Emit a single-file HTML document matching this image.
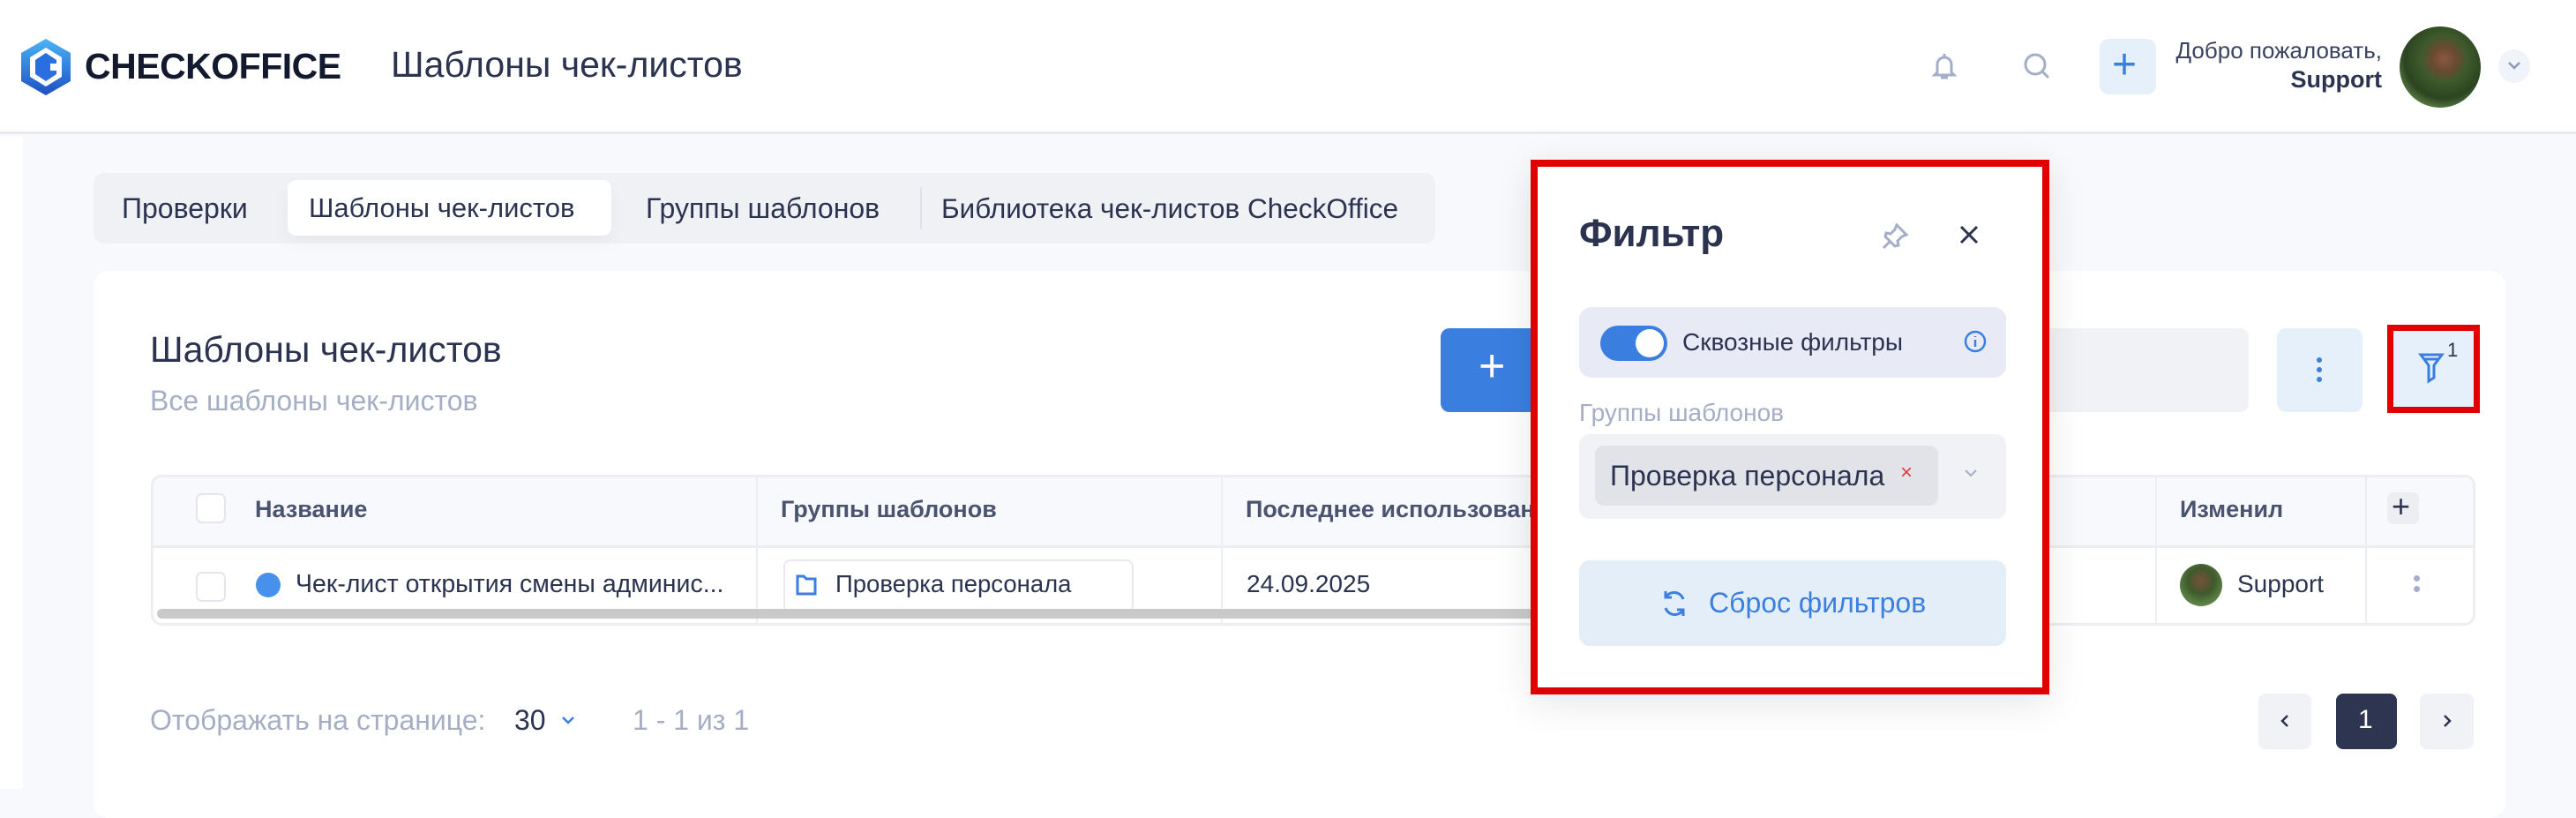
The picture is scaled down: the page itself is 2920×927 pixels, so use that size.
<!DOCTYPE html>
<html><head><meta charset="utf-8"><style>
*{box-sizing:border-box;margin:0;padding:0}
body{width:2920px;height:894px;overflow:hidden;background:#f8f9fc;font-family:"Liberation Sans","Noto Sans CJK SC",sans-serif;position:relative;color:#2b3350}
.a{position:absolute}
.t{position:absolute;white-space:nowrap}
</style></head><body>
<!-- header -->
<div class="a" style="left:0;top:0;width:2920px;height:152px;background:#fff;border-bottom:3px solid #e8eaee"></div>
<svg class="a" style="left:24px;top:44px" width="56" height="64" viewBox="0 0 56 64">
<defs><linearGradient id="g" x1="0" y1="0" x2="0" y2="1"><stop offset="0" stop-color="#4ab4f5"/><stop offset="1" stop-color="#1e4fc4"/></linearGradient></defs>
<polygon points="28,0 56,16 56,48 28,64 0,48 0,16" fill="url(#g)"/>
<polygon points="28,10 46,21 46,43 28,54 10,43 10,21" fill="#fff"/>
<polygon points="28,16 40,24 40,28 33,28 33,36 40,36 40,40 28,48 16,40 16,24" fill="#2a6fe0"/>
</svg>
<div class="t" style="left:96px;top:52px;font-size:41px;font-weight:900;color:#131a30;letter-spacing:-0.5px">CHECKOFFICE</div>
<div class="t" style="left:443px;top:50px;font-size:41px;color:#2b3350">Шаблоны чек-листов</div>
<svg class="a" style="left:2190px;top:58px" width="28" height="34" viewBox="0 0 28 34" fill="none" stroke="#a5aec8" stroke-width="3"><path d="M14 3v3M6 24V15a8 8 0 0 1 16 0v9l3 3H3z"/><path d="M10 30h8"/></svg>
<svg class="a" style="left:2292px;top:58px" width="34" height="34" viewBox="0 0 34 34" fill="none" stroke="#a5aec8" stroke-width="3"><circle cx="15" cy="15" r="11"/><path d="M23 23l7 7"/></svg>
<div class="a" style="left:2380px;top:44px;width:64px;height:63px;background:#e6f0fb;border-radius:10px"></div>
<div class="t" style="left:2394px;top:46px;font-size:48px;color:#3a7fe0;font-weight:300">+</div>
<div class="t" style="right:220px;top:42px;font-size:26px;color:#3b4360">Добро пожаловать,</div>
<div class="t" style="right:220px;top:75px;font-size:27px;color:#2b3350;font-weight:bold">Support</div>
<div class="a" style="left:2720px;top:30px;width:92px;height:92px;border-radius:50%;background:radial-gradient(circle at 55% 40%,#8a5a40 0,#6b4a30 18%,#3f5a2c 35%,#2c4420 60%,#6f9a58 85%,#c8d8b8 100%)"></div>
<div class="a" style="left:2832px;top:56px;width:36px;height:38px;border-radius:50%;background:#f0f3fa"></div>
<svg class="a" style="left:2842px;top:68px" width="16" height="12" viewBox="0 0 16 12"><path d="M2 3l6 6 6-6" fill="none" stroke="#8e98b5" stroke-width="2.5"/></svg>
<div class="a" style="left:0;top:155px;width:26px;height:739px;background:#fff"></div>

<!-- tabs -->
<div class="a" style="left:106px;top:196px;width:1521px;height:80px;background:#eff1f5;border-radius:12px"></div>
<div class="a" style="left:326px;top:204px;width:367px;height:63px;background:#fff;border-radius:10px;box-shadow:0 8px 20px rgba(0,0,0,0.04)"></div>
<div class="t" style="left:138px;top:218px;font-size:32px;color:#2b3350">Проверки</div>
<div class="t" style="left:350px;top:218px;font-size:31px;color:#2b3350">Шаблоны чек-листов</div>
<div class="t" style="left:732px;top:218px;font-size:32px;color:#2b3350">Группы шаблонов</div>
<div class="a" style="left:1043px;top:212px;width:2px;height:48px;background:#dfe2e8"></div>
<div class="t" style="left:1067px;top:218px;font-size:31.5px;color:#2b3350">Библиотека чек-листов CheckOffice</div>

<!-- card -->
<div class="a" style="left:106px;top:307px;width:2734px;height:620px;background:#fff;border-radius:18px"></div>
<div class="t" style="left:170px;top:373px;font-size:41px;color:#2b3350">Шаблоны чек-листов</div>
<div class="t" style="left:170px;top:436px;font-size:32px;color:#a5aec5">Все шаблоны чек-листов</div>
<div class="a" style="left:1633px;top:372px;width:200px;height:95px;background:#3a7fe0;border-radius:10px"></div>
<div class="t" style="left:1676px;top:385px;font-size:52px;color:#fff;font-weight:300">+</div>
<div class="a" style="left:2280px;top:372px;width:269px;height:95px;background:#f0f2f5;border-radius:10px"></div>
<div class="a" style="left:2581px;top:372px;width:97px;height:95px;background:#e6f0fb;border-radius:10px"></div>
<div class="a" style="left:2626px;top:405px;width:6px;height:6px;border-radius:50%;background:#3a7fe0;box-shadow:0 11px 0 #3a7fe0,0 22px 0 #3a7fe0"></div>
<div class="a" style="left:2706px;top:368px;width:105px;height:100px;border:7px solid #e00000;background:#e6f0fb"></div>
<svg class="a" style="left:2741px;top:398px" width="30" height="38" viewBox="0 0 30 38" fill="none" stroke="#3a7fe0" stroke-width="3"><path d="M3 4h24l-9 12v14l-6 4V16z"/><path d="M6 9h18"/></svg>
<div class="t" style="left:2774px;top:384px;font-size:22px;color:#2b3350">1</div>

<!-- table -->
<div class="a" style="left:171px;top:538px;width:2635px;height:171px;border:3px solid #eceef2;border-radius:12px;background:#fff;overflow:hidden">
 <div class="a" style="left:0;top:0;width:2635px;height:80px;background:#f8f9fc;border-bottom:3px solid #eceef2"></div>
</div>
<div class="a" style="left:857px;top:540px;width:2px;height:168px;background:#eceef2"></div>
<div class="a" style="left:1384px;top:540px;width:2px;height:168px;background:#eceef2"></div>
<div class="a" style="left:2443px;top:540px;width:2px;height:168px;background:#eceef2"></div>
<div class="a" style="left:2681px;top:540px;width:2px;height:168px;background:#eceef2"></div>
<div class="a" style="left:222px;top:559px;width:34px;height:34px;border:2px solid #e4e6ec;border-radius:7px;background:#fff"></div>
<div class="t" style="left:289px;top:562px;font-size:27px;font-weight:bold;color:#4a5370">Название</div>
<div class="t" style="left:885px;top:562px;font-size:27px;font-weight:bold;color:#4a5370">Группы шаблонов</div>
<div class="t" style="left:1412px;top:562px;font-size:27px;font-weight:bold;color:#4a5370">Последнее использование</div>
<div class="t" style="left:2471px;top:562px;font-size:27px;font-weight:bold;color:#4a5370">Изменил</div>
<div class="a" style="left:2706px;top:558px;width:36px;height:36px;background:#eceef2;border-radius:7px"></div>
<div class="t" style="left:2711px;top:553px;font-size:36px;color:#2b3350">+</div>
<div class="a" style="left:222px;top:648px;width:34px;height:34px;border:2px solid #e4e6ec;border-radius:7px;background:#fff"></div>
<div class="a" style="left:290px;top:649px;width:28px;height:28px;border-radius:50%;background:#4790ec"></div>
<div class="t" style="left:335px;top:646px;font-size:28.5px;color:#2b3350">Чек-лист открытия смены админис...</div>
<div class="a" style="left:888px;top:634px;width:397px;height:60px;border:2px solid #e8eaee;border-radius:8px;background:#fff"></div>
<svg class="a" style="left:902px;top:650px" width="24" height="26" viewBox="0 0 24 26" fill="none" stroke="#3a7fe0" stroke-width="3"><path d="M2 3h7l3 3h10v17H2z"/></svg>
<div class="t" style="left:947px;top:646px;font-size:27.5px;color:#2b3350">Проверка персонала</div>
<div class="t" style="left:1413px;top:646px;font-size:28px;color:#2b3350">24.09.2025</div>
<div class="a" style="left:2471px;top:639px;width:48px;height:48px;border-radius:50%;background:radial-gradient(circle at 50% 40%,#7a5038 0,#3f5a2c 40%,#6f9a58 90%)"></div>
<div class="t" style="left:2536px;top:646px;font-size:28px;color:#2b3350">Support</div>
<div class="a" style="left:2736px;top:652px;width:7px;height:7px;border-radius:50%;background:#a5aec8;box-shadow:0 12px 0 #a5aec8"></div>
<div class="a" style="left:178px;top:690px;width:1560px;height:11px;background:#c9c9c9;border-radius:6px"></div>

<!-- pagination -->
<div class="t" style="left:170px;top:798px;font-size:32px;color:#a5aec5">Отображать на странице:</div>
<div class="t" style="left:583px;top:798px;font-size:32px;color:#2b3350">30</div>
<svg class="a" style="left:636px;top:810px" width="16" height="12" viewBox="0 0 16 12"><path d="M2 3l6 6 6-6" fill="none" stroke="#3a7fe0" stroke-width="2.5"/></svg>
<div class="t" style="left:717px;top:798px;font-size:32px;color:#a5aec5">1 - 1 из 1</div>
<div class="a" style="left:2560px;top:786px;width:60px;height:63px;background:#f0f2f5;border-radius:8px"></div>
<svg class="a" style="left:2583px;top:808px" width="14" height="18" viewBox="0 0 14 18"><path d="M10 3L4 9l6 6" fill="none" stroke="#2b3350" stroke-width="2.5"/></svg>
<div class="a" style="left:2648px;top:786px;width:69px;height:63px;background:#2e3550;border-radius:8px"></div>
<div class="t" style="left:2673px;top:799px;font-size:30px;color:#fff">1</div>
<div class="a" style="left:2743px;top:786px;width:61px;height:63px;background:#f0f2f5;border-radius:8px"></div>
<svg class="a" style="left:2767px;top:808px" width="14" height="18" viewBox="0 0 14 18"><path d="M4 3l6 6-6 6" fill="none" stroke="#2b3350" stroke-width="2.5"/></svg>

<!-- filter popup -->
<div class="a" style="left:1735px;top:181px;width:588px;height:606px;border:8px solid #e00000;background:#fff;box-shadow:0 10px 40px rgba(0,0,0,0.1)"></div>
<div class="t" style="left:1790px;top:240px;font-size:44px;font-weight:bold;color:#2b3350">Фильтр</div>
<svg class="a" style="left:2132px;top:252px" width="32" height="32" viewBox="0 0 32 32" fill="none" stroke="#a5aec8" stroke-width="3"><path d="M18 3l11 11-5 2-5 5 1 5-4 1L5 16l1-4 5 1 5-5z"/><path d="M10 22l-7 7"/></svg>
<svg class="a" style="left:2220px;top:254px" width="24" height="24" viewBox="0 0 24 24" stroke="#2b3350" stroke-width="3"><path d="M3 3l18 18M21 3L3 21"/></svg>
<div class="a" style="left:1790px;top:348px;width:484px;height:80px;background:#e8ebf6;border-radius:14px"></div>
<div class="a" style="left:1814px;top:369px;width:76px;height:40px;background:#3a7fe0;border-radius:20px"></div>
<div class="a" style="left:1854px;top:373px;width:32px;height:32px;background:#fff;border-radius:50%"></div>
<div class="t" style="left:1907px;top:372px;font-size:28px;color:#2b3350">Сквозные фильтры</div>
<svg class="a" style="left:2225px;top:373px" width="28" height="28" viewBox="0 0 28 28" fill="none" stroke="#3a7fe0" stroke-width="2.5"><circle cx="14" cy="14" r="11"/><path d="M14 12v8M14 8v1"/></svg>
<div class="t" style="left:1790px;top:452px;font-size:28px;color:#a5aec5">Группы шаблонов</div>
<div class="a" style="left:1790px;top:492px;width:484px;height:96px;background:#f0f2f5;border-radius:12px"></div>
<div class="a" style="left:1808px;top:505px;width:389px;height:68px;background:#e1e3e8;border-radius:10px"></div>
<div class="t" style="left:1825px;top:521px;font-size:32px;color:#2b3350">Проверка персонала</div>
<div class="t" style="left:2154px;top:522px;font-size:24px;color:#e04040">×</div>
<svg class="a" style="left:2226px;top:530px" width="16" height="12" viewBox="0 0 16 12"><path d="M2 3l6 6 6-6" fill="none" stroke="#a5aec8" stroke-width="2"/></svg>
<div class="a" style="left:1790px;top:635px;width:484px;height:97px;background:#e4eef9;border-radius:12px"></div>
<svg class="a" style="left:1882px;top:667px" width="32" height="34" viewBox="0 0 32 34" fill="none" stroke="#3a7fe0" stroke-width="3"><path d="M26 12a11 11 0 0 0-20-2M6 22a11 11 0 0 0 20 2"/><path d="M6 3v7h7M26 31v-7h-7"/></svg>
<div class="t" style="left:1937px;top:665px;font-size:32px;color:#3a7fe0">Сброс фильтров</div>
</body></html>
